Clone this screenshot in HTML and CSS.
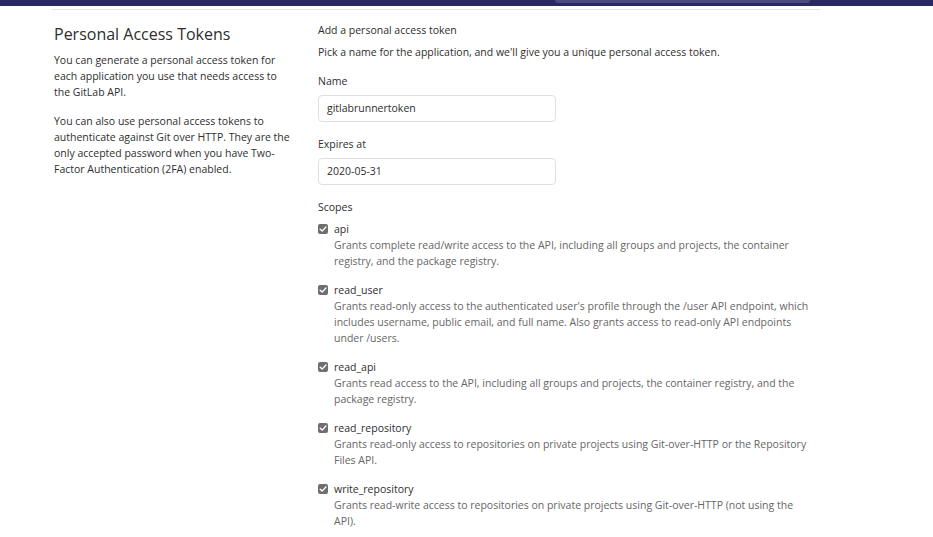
FILE: index.html
```html
<!DOCTYPE html>
<html lang="en">
<head>
<meta charset="utf-8">
<title>Personal Access Tokens</title>
<link rel="stylesheet" href="styles.css">
</head>
<body>
<header class="topbar">
  <div class="search"></div>
</header>
<main class="content">
  <div class="row">
    <section class="intro">
      <h4 class="title">Personal Access Tokens</h4>
      <p>You can generate a personal access token for each application you use that needs access to the GitLab API.</p>
      <p>You can also use personal access tokens to authenticate against Git over HTTP. They are the only accepted password when you have Two-Factor Authentication (2FA) enabled.</p>
    </section>
    <section class="form">
      <h5 class="form-title">Add a personal access token</h5>
      <p class="lead">Pick a name for the application, and we'll give you a unique personal access token.</p>
      <div class="group">
        <label class="label">Name</label>
        <div class="input">gitlabrunnertoken</div>
      </div>
      <div class="group">
        <label class="label">Expires at</label>
        <div class="input">2020-05-31</div>
      </div>
      <div class="group">
        <label class="label">Scopes</label>
        <div class="scopes">
          <div class="scope">
            <div class="scope-head"><span class="check"><svg viewBox="0 0 10 10" width="10" height="10"><path d="M2.2 5.2 L4.2 7.1 L7.9 3" fill="none" stroke="#fff" stroke-width="1.4" stroke-linecap="round" stroke-linejoin="round"/></svg></span><span class="scope-name">api</span></div>
            <div class="scope-desc">Grants complete read/write access to the API, including all groups and projects, the container registry, and the package registry.</div>
          </div>
          <div class="scope">
            <div class="scope-head"><span class="check"><svg viewBox="0 0 10 10" width="10" height="10"><path d="M2.2 5.2 L4.2 7.1 L7.9 3" fill="none" stroke="#fff" stroke-width="1.4" stroke-linecap="round" stroke-linejoin="round"/></svg></span><span class="scope-name">read_user</span></div>
            <div class="scope-desc">Grants read-only access to the authenticated user's profile through the /user API endpoint, which includes username, public email, and full name. Also grants access to read-only API endpoints under /users.</div>
          </div>
          <div class="scope">
            <div class="scope-head"><span class="check"><svg viewBox="0 0 10 10" width="10" height="10"><path d="M2.2 5.2 L4.2 7.1 L7.9 3" fill="none" stroke="#fff" stroke-width="1.4" stroke-linecap="round" stroke-linejoin="round"/></svg></span><span class="scope-name">read_api</span></div>
            <div class="scope-desc">Grants read access to the API, including all groups and projects, the container registry, and the package registry.</div>
          </div>
          <div class="scope">
            <div class="scope-head"><span class="check"><svg viewBox="0 0 10 10" width="10" height="10"><path d="M2.2 5.2 L4.2 7.1 L7.9 3" fill="none" stroke="#fff" stroke-width="1.4" stroke-linecap="round" stroke-linejoin="round"/></svg></span><span class="scope-name">read_repository</span></div>
            <div class="scope-desc">Grants read-only access to repositories on private projects using Git-over-HTTP or the Repository Files API.</div>
          </div>
          <div class="scope">
            <div class="scope-head"><span class="check"><svg viewBox="0 0 10 10" width="10" height="10"><path d="M2.2 5.2 L4.2 7.1 L7.9 3" fill="none" stroke="#fff" stroke-width="1.4" stroke-linecap="round" stroke-linejoin="round"/></svg></span><span class="scope-name">write_repository</span></div>
            <div class="scope-desc">Grants read-write access to repositories on private projects using Git-over-HTTP (not using the API).</div>
          </div>
        </div>
      </div>
    </section>
  </div>
</main>
</body>
</html>
```
FILE: styles.css
```css
html, body {
  margin: 0;
  padding: 0;
  background: #fff;
}
body {
  font-family: "Open Sans", "Noto Sans", "Liberation Sans", sans-serif;
  font-size: 10.5px;
  color: #2e2e2e;
}
.topbar {
  height: 6px;
  background: #292961;
  display: flex;
  justify-content: flex-end;
}
.search {
  width: 255px;
  height: 3px;
  margin-right: 123px;
  background: #4b4b80;
  border-radius: 0 0 3px 3px;
}
.content {
  width: 768px;
  margin-left: 52px;
  margin-top: 3px;
  border-top: 1px solid #e5e5e5;
}
.row {
  display: flex;
  padding-top: 12px;
}
.intro {
  flex: 0 0 236px;
  padding-left: 2px;
  margin-right: 28px;
}
.title {
  margin: 0 0 6px;
  font-size: 16px;
  font-weight: 400;
  line-height: 24px;
  color: #2e2e2e;
}
.intro p {
  margin: 0 0 13px;
  font-size: 10.5px;
  line-height: 16px;
  color: #2e2e2e;
}
.form {
  flex: 1;
  min-width: 0;
}
.form-title {
  margin: 0;
  font-size: 10.5px;
  font-weight: 400;
  line-height: 16px;
  color: #2e2e2e;
}
.lead {
  margin: 6px 0 0;
  line-height: 16px;
}
.group {
  margin-top: 13px;
}
.label {
  display: block;
  line-height: 16px;
  margin-bottom: 6px;
  color: #2e2e2e;
}
.input {
  width: 238px;
  height: 27px;
  box-sizing: border-box;
  border: 1px solid #dfdfdf;
  border-radius: 4px;
  padding: 0 8px;
  line-height: 25px;
  color: #2e2e2e;
}
.group + .group {
  margin-top: 14px;
}
.scopes {
  display: flex;
  flex-direction: column;
  gap: 13px;
  margin-top: 3px;
}
.scope-head {
  display: flex;
  align-items: center;
  gap: 6px;
  line-height: 16px;
}
.check {
  width: 10px;
  height: 10px;
  border-radius: 2px;
  background: #6e6e6e;
  display: flex;
}
.scope-name {
  color: #2e2e2e;
}
.scope-desc {
  margin-left: 16px;
  width: 479px;
  line-height: 16px;
  color: #666;
}
```
